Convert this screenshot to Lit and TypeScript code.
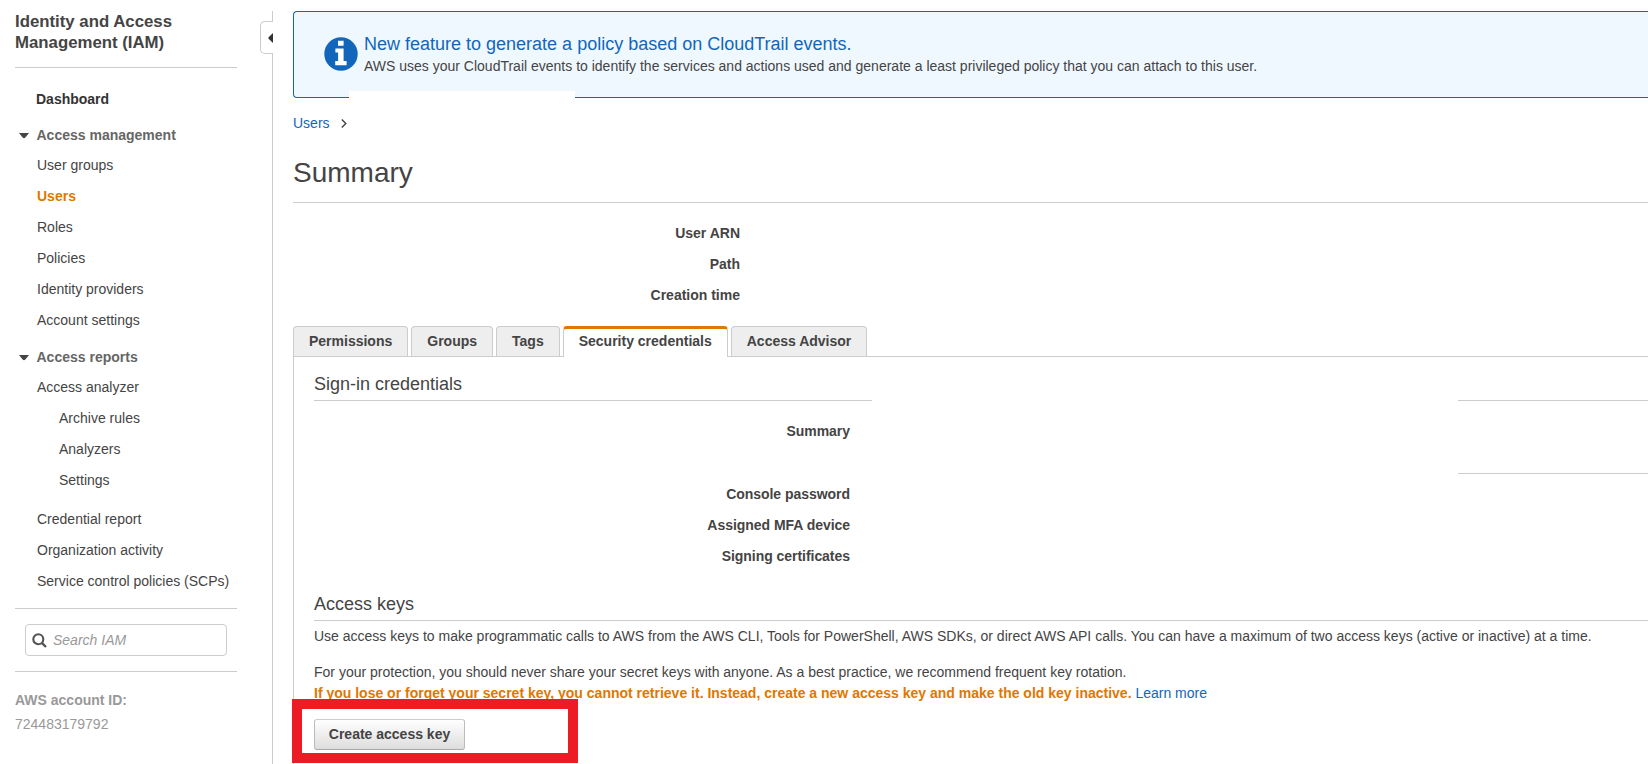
import { LitElement, html, css } from "lit";
import { customElement } from "lit/decorators.js";
import { classMap } from "lit/directives/class-map.js";

const base = css`
  :host, * { box-sizing: border-box; }
  h1, h2, h3, p, ul, li, button { margin: 0; padding: 0; }
  ul { list-style: none; }
  a { color: #1166bb; text-decoration: none; }
`;

@customElement("iam-sidebar")
class IamSidebar extends LitElement {
  static styles = [base, css`
    :host { display: block; width: 260px; flex: none; padding: 10px 23px 0 15px; }
    .title { font-size: 16.8px; line-height: 21px; height: 58px; font-weight: bold; border-bottom: 1px solid #ccc; width: 222px; padding-top: 1px; }
    .dashboard { display: block; margin: 21px 0 0 21px; color: #333; font-weight: bold; }
    .group { display: flex; align-items: center; margin-top: 16px; color: #666; font-weight: bold; }
    .reports { margin-top: 6px; }
    .caret { width: 10px; height: 6px; margin: 2px 7.5px 0 4px; flex: none; }
    .items { padding: 10px 0 0 22px; }
    .items li { height: 31px; white-space: nowrap; }
    .items .nested { padding-left: 22px; }
    .items .gap { height: 39px; }
    .items .active { color: #e07700; font-weight: bold; }
    .search { width: 222px; height: 64px; margin-top: 6px; padding: 15px 10px; border: solid #ccc; border-width: 1px 0; }
    .field { display: flex; align-items: center; height: 32px; border: 1px solid #ccc; border-radius: 4px; padding-left: 6px; color: #999; font-style: italic; }
    .field svg { margin-right: 6px; }
    .account { margin-top: 16px; color: #999; line-height: 24px; }
  `];
  group(label: string, extra = "") {
    return html`<div class="group ${extra}">
      <svg class="caret" viewBox="0 0 10 6"><path d="M0 0h10L6.3 4.6Q5 6 3.7 4.6z" fill="#444"/></svg>${label}</div>`;
  }
  render() {
    const access = ["User groups", "Users", "Roles", "Policies", "Identity providers", "Account settings"];
    const reports: [string, string][] = [
      ["Access analyzer", ""], ["Archive rules", "nested"], ["Analyzers", "nested"], ["Settings", "nested gap"],
      ["Credential report", ""], ["Organization activity", ""], ["Service control policies (SCPs)", ""],
    ];
    return html`
      <h1 class="title">Identity and Access<br>Management (IAM)</h1>
      <a class="dashboard">Dashboard</a>
      ${this.group("Access management")}
      <ul class="items">${access.map(t => html`<li class=${classMap({ active: t === "Users" })}>${t}</li>`)}</ul>
      ${this.group("Access reports", "reports")}
      <ul class="items">${reports.map(([t, c]) => html`<li class=${c}>${t}</li>`)}</ul>
      <div class="search"><div class="field">
        <svg width="15" height="15" viewBox="0 0 15 15" fill="none" stroke="#555"><circle cx="6.3" cy="6.3" r="5" stroke-width="2.1"/><path d="M9.8 9.8l4.2 4.2" stroke-width="2.4"/></svg>
        <span>Search IAM</span></div></div>
      <div class="account"><b>AWS account ID:</b><br>724483179792</div>`;
  }
}

@customElement("iam-divider")
class IamDivider extends LitElement {
  static styles = [base, css`
    :host { display: flex; flex-direction: column; width: 13px; flex: none; padding-top: 11px; }
    .line { width: 1px; align-self: flex-end; background: #ccc; }
    .top { height: 10px; }
    .rest { flex: 1; }
    .toggle { display: flex; align-items: center; justify-content: flex-end; height: 33px; border: 1px solid #ccc; border-right: 0; border-radius: 5px 0 0 5px; }
  `];
  render() {
    return html`<div class="line top"></div>
      <div class="toggle"><svg width="5" height="10" viewBox="0 0 5 10"><path d="M5 0v10L.6 5.8Q0 5 .6 4.2z" fill="#333"/></svg></div>
      <div class="line rest"></div>`;
  }
}

@customElement("iam-banner")
class IamBanner extends LitElement {
  static styles = [base, css`
    :host { display: flex; position: relative; height: 87px; border: 1px solid #1166bb; border-right: 0; border-radius: 4px 0 0 4px; background: #f0f8ff; padding: 21px 0 0 30px; }
    .icon { width: 34px; height: 34px; margin: 4px 6px 0 0; flex: none; }
    .head { font-size: 18px; line-height: 22px; margin-bottom: 1px; color: #1166bb; white-space: nowrap; }
    .text { white-space: nowrap; line-height: 20px; }
    .cover { position: absolute; left: 55px; top: 79px; width: 226px; height: 8px; background: #fff; }
  `];
  render() {
    return html`
      <svg class="icon" viewBox="0 0 34 34"><circle cx="17" cy="17" r="16.7" fill="#1166bb"/>
        <path d="M14 3.7h5.6v5H14zM11.4 11.4h8.2V24h3v4.2H11.2V24h2.9v-8.4h-2.7z" fill="#fff"/></svg>
      <div><div class="head">New feature to generate a policy based on CloudTrail events.</div>
        <div class="text">AWS uses your CloudTrail events to identify the services and actions used and generate a least privileged policy that you can attach to this user.</div></div>
      <div class="cover"></div>`;
  }
}

@customElement("iam-credentials")
class IamCredentials extends LitElement {
  static styles = [base, css`
    :host { display: block; margin-top: 16px; }
    .tabs { display: flex; gap: 3px; height: 31px; border-bottom: 1px solid #ccc; }
    .tab { height: 30px; padding: 4px 15px 0; border: 1px solid #ccc; border-bottom: 0; border-radius: 4px 4px 0 0; background: #eee; font-weight: bold; white-space: nowrap; }
    .tab.active { height: 31px; background: #fff; border-top: 3px solid #e07700; padding-top: 2px; }
    .panel { border-left: 1px solid #ccc; padding-left: 20px; height: 408px; }
    .heading { font-size: 18px; line-height: 24px; font-weight: normal; padding-top: 15px; height: 43px; }
    .rules { display: flex; justify-content: space-between; height: 74px; margin-bottom: -74px; }
    .rule { height: 1px; background: #ccc; width: 558px; }
    .box { width: 190px; border: solid #ccc; border-width: 1px 0; }
    .labels { width: 536px; text-align: right; font-weight: bold; letter-spacing: -0.04px; padding-top: 21px; }
    .labels li { height: 31px; }
    .labels .tall { height: 63px; }
    .heading.keys { height: 44px; border-bottom: 1px solid #ccc; }
    .text { padding-top: 5px; height: 41px; white-space: nowrap; }
    .protect { line-height: 21px; white-space: nowrap; }
    .warn { color: #e07700; }
    .button { margin-top: 15px; padding-bottom: 2px; width: 151px; height: 31px; border: 1px solid #bbb; border-color: #ccc #bbb #aaa; border-radius: 3px; background: linear-gradient(#fff, #ddd); color: #444; font: bold 14px/20px "Liberation Sans", Arial, sans-serif; display: block; }
    .mark { position: absolute; left: 292px; top: 699px; width: 286px; height: 64px; border: 10px solid #ed1c24; pointer-events: none; }
  `];
  render() {
    const tabs = ["Permissions", "Groups", "Tags", "Security credentials", "Access Advisor"];
    return html`
      <div class="tabs">${tabs.map((t, i) => html`<div class=${classMap({ tab: true, active: i === 3 })}>${t}</div>`)}</div>
      <div class="panel">
        <h3 class="heading">Sign-in credentials</h3>
        <div class="rules"><div class="rule"></div><div class="box"></div></div>
        <ul class="labels"><li class="tall">Summary</li><li>Console password</li><li>Assigned MFA device</li><li>Signing certificates</li></ul>
        <h3 class="heading keys">Access keys</h3>
        <p class="text">Use access keys to make programmatic calls to AWS from the AWS CLI, Tools for PowerShell, AWS SDKs, or direct AWS API calls. You can have a maximum of two access keys (active or inactive) at a time.</p>
        <p class="protect">For your protection, you should never share your secret keys with anyone. As a best practice, we recommend frequent key rotation.<br>
          <b class="warn">If you lose or forget your secret key, you cannot retrieve it. Instead, create a new access key and make the old key inactive.</b> <a>Learn more</a></p>
        <button class="button">Create access key</button>
      </div>
      <div class="mark"></div>`;
  }
}

@customElement("app-root")
class AppRoot extends LitElement {
  static styles = [base, css`
    :host { display: flex; position: relative; width: 100%; height: 764px; overflow: hidden; background: #fff; color: #444; font: 14px/20px "Liberation Sans", Arial, sans-serif; }
    .main { flex: 1; min-width: 0; padding: 11px 0 0 20px; }
    .crumbs { display: flex; align-items: center; margin-top: 15px; gap: 11px; }
    .summary { font-size: 28px; line-height: 36px; font-weight: normal; margin-top: 22px; height: 48px; border-bottom: 1px solid #ccc; }
    .facts { width: 447px; padding-top: 20px; text-align: right; font-weight: bold; }
    .facts li { height: 31px; }
    .facts li:last-child { height: 25px; }
  `];
  render() {
    return html`
      <iam-sidebar></iam-sidebar><iam-divider></iam-divider>
      <main class="main">
        <iam-banner></iam-banner>
        <nav class="crumbs"><a>Users</a><svg width="6" height="9" viewBox="0 0 6 9" fill="none" stroke="#444" stroke-width="1.4"><path d="M.8.6l4 3.9-4 3.9"/></svg></nav>
        <h2 class="summary">Summary</h2>
        <ul class="facts"><li>User ARN</li><li>Path</li><li>Creation time</li></ul>
        <iam-credentials></iam-credentials>
      </main>`;
  }
}
